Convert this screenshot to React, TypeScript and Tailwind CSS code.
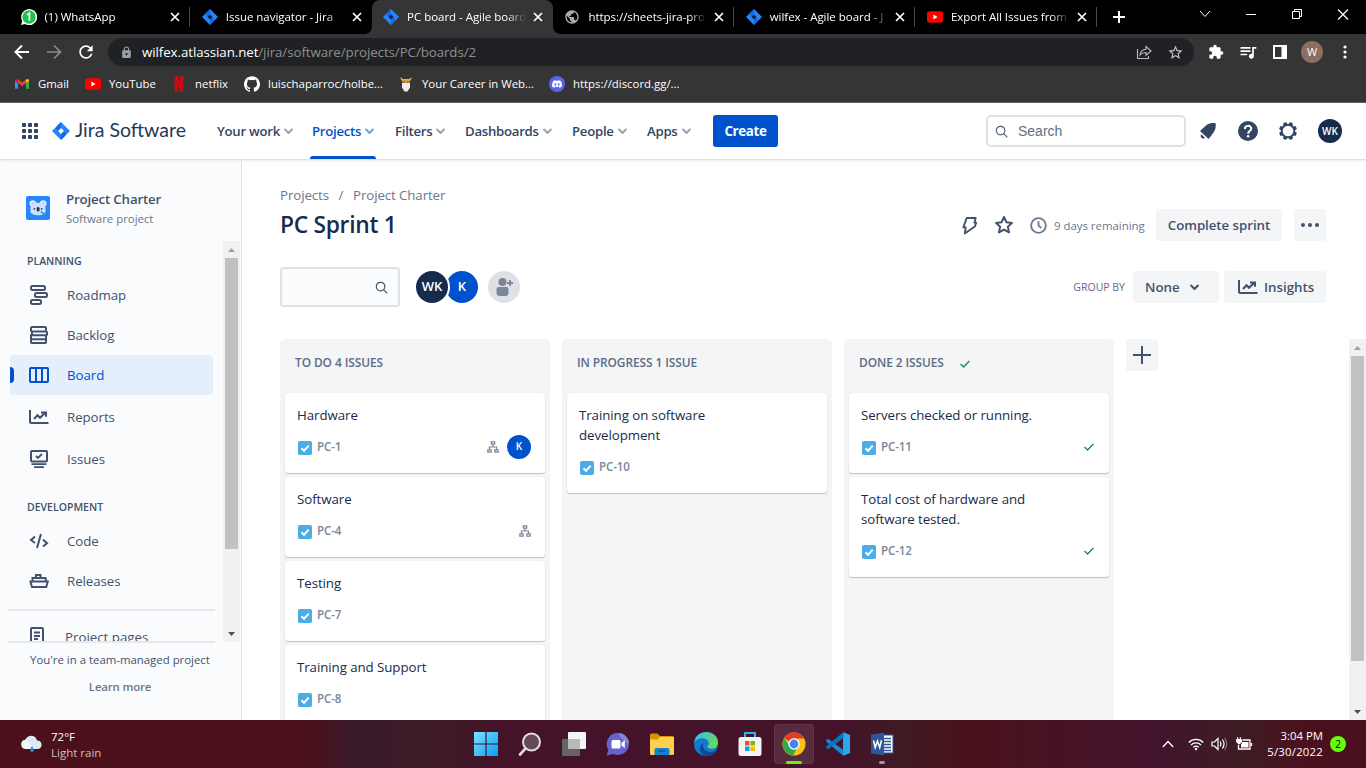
import React from "react";
import { MdExtension, MdLock, MdQueueMusic, MdRefresh, MdPublic, MdStarBorder } from "react-icons/md";
import { SiGithub, SiDiscord, SiNetflix } from "react-icons/si";

/* ---------- Brand marks ---------- */

function JiraMark({ className, hole = "#14233f" }: { className: string; hole?: string }) {
  return (
    <svg viewBox="0 0 18 18" className={className}>
      <path d="M9 0 18 9 9 18 0 9Z" fill="#2684ff" />
      <path d="M9 0v6.1L6.1 9 4.6 7.4C3.8 6 4.2 4.8 5 4Z" fill="#0f62d8" opacity=".75" />
      <path d="M9 18v-6.1L11.9 9l1.5 1.6c.8 1.4.4 2.6-.4 3.4Z" fill="#0f62d8" opacity=".75" />
      <path d="M9 6.1 11.9 9 9 11.9 6.1 9Z" fill={hole} />
    </svg>
  );
}

function YouTubeMark() {
  return (
    <svg viewBox="0 0 16 16" className="size-4 shrink-0">
      <rect y="2.2" width="16" height="11.6" rx="2.8" fill="#f00" />
      <path d="M6.4 5.6v4.8L10.5 8Z" fill="#fff" />
    </svg>
  );
}

function WhatsAppMark() {
  return (
    <svg viewBox="0 0 16 16" className="size-4 shrink-0">
      <path d="M0 16 1.2 12A8 8 0 1 1 4 14.9Z" fill="#fff" />
      <circle cx="8" cy="8" r="6.7" fill="#1fc24f" />
      <path d="M6.2 5.9 8.4 4.2v7.6" stroke="#fff" strokeWidth="1.7" fill="none" />
    </svg>
  );
}

function GmailMark() {
  return (
    <svg viewBox="0 0 16 16" className="size-4 shrink-0">
      <path d="M1 4.5v8.3h3V7Z" fill="#4285f4" />
      <path d="M15 4.5v8.3h-3V7Z" fill="#34a853" />
      <path d="M4 7V3.6l4 3 4-3V7l-4 3Z" fill="#ea4335" />
      <path d="M1 4.6C1 3 2.7 2.6 4 3.6V7L1 4.9Z" fill="#c5221f" />
      <path d="M15 4.6C15 3 13.3 2.6 12 3.6V7l3-2.1Z" fill="#fbbc04" />
    </svg>
  );
}

function BeardMark() {
  return (
    <svg viewBox="0 0 16 16" className="size-4 shrink-0">
      <path d="M2.5 1c0 2 .6 3.4 2 4h7c1.4-.6 2-2 2-4l-2.2 2H4.7Z" fill="#e8b04c" />
      <path d="M4.5 4h7v4h-7Z" fill="#d99a4b" />
      <path d="M4 7h8v4.5l-2.5 4h-3L4 11.5Z" fill="#f1efec" />
      <path d="M5.8 6h1M9.2 6h1" stroke="#4a2b17" />
    </svg>
  );
}

/* ---------- Browser ---------- */

type Tab = { title: string; icon: React.ReactNode; active?: boolean; divider?: boolean };

const tabs: Tab[] = [
  { title: "(1) WhatsApp", icon: <WhatsAppMark />, divider: true },
  { title: "Issue navigator - Jira", icon: <JiraMark className="size-4 shrink-0" /> },
  { title: "PC board - Agile board", icon: <JiraMark className="size-4 shrink-0" />, active: true },
  { title: "https://sheets-jira-pro", icon: <MdPublic className="size-4 shrink-0 text-[#a9adb3]" />, divider: true },
  { title: "wilfex - Agile board - J", icon: <JiraMark className="size-4 shrink-0" />, divider: true },
  { title: "Export All Issues from", icon: <YouTubeMark />, divider: true },
];

function TabStrip() {
  return (
    <div className="flex h-[34px] bg-black pl-[9px] text-[11.5px] text-white">
      {tabs.map((tab) => (
        <div
          key={tab.title}
          className={`relative flex w-[181.3px] shrink-0 items-center pl-[11.5px] pr-[10px] ${tab.active ? "rounded-t-lg bg-[#353535]" : ""}`}
        >
          {tab.icon}
          <span className="ml-2 w-[119px] overflow-hidden whitespace-nowrap tracking-[-0.03px] [mask-image:linear-gradient(to_right,black_84%,transparent)]">
            {tab.title}
          </span>
          <svg viewBox="0 0 10 10" className="ml-auto size-[10px] shrink-0">
            <path d="m1 1 8 8M9 1 1 9" stroke="#fff" strokeWidth="1.7" />
          </svg>
          {tab.active && (
            <>
              <span className="absolute -left-2 bottom-0 size-2 bg-[radial-gradient(circle_at_0_0,transparent_8px,#353535_8px)]" />
              <span className="absolute -right-2 bottom-0 size-2 bg-[radial-gradient(circle_at_100%_0,transparent_8px,#353535_8px)]" />
            </>
          )}
          {tab.divider && <span className="absolute right-0 top-[7px] h-5 w-px bg-[#4a4a4a]" />}
        </div>
      ))}
      <svg viewBox="0 0 12 12" className="ml-[16px] mt-[11px] size-3">
        <path d="M6 0v12M0 6h12" stroke="#fff" strokeWidth="2" />
      </svg>
      <div className="ml-auto flex h-7 text-white">
        <svg viewBox="0 0 46 28" className="w-[46px]" fill="none" stroke="currentColor">
          <path d="m18 11 5 5.500 5-5.500" />
        </svg>
        <svg viewBox="0 0 46 28" className="w-[46px]" fill="none" stroke="currentColor">
          <path d="M18 14.500h10" />
        </svg>
        <svg viewBox="0 0 46 28" className="w-[46px]" fill="none" stroke="currentColor">
          <path d="M18.500 11.500h7v7h-7ZM20.500 11V9.500h7v7H26" />
        </svg>
        <svg viewBox="0 0 46 28" className="w-[46px]" fill="none" stroke="currentColor">
          <path d="m18 9.500 10 10M28 9.500l-10 10" strokeWidth="1.2" />
        </svg>
      </div>
    </div>
  );
}

function AddressRow() {
  return (
    <div className="flex h-9 items-center">
      <svg viewBox="0 0 16 16" className="ml-[14px] size-4" fill="none" stroke="#fff" strokeWidth="1.9">
        <path d="M15 8H2M8 1.500 1.500 8 8 14.500" />
      </svg>
      <svg viewBox="0 0 16 16" className="ml-4 size-4" fill="none" stroke="#8b8b8b" strokeWidth="1.7">
        <path d="M1 8h13M8 1.500 14.500 8 8 14.500" />
      </svg>
      <MdRefresh className="ml-[14px] size-5 text-white" />
      <div className="ml-[12px] flex h-7 w-[1086px] items-center rounded-full bg-[#202124] pl-3">
        <MdLock className="size-[13px] text-[#9aa0a6]" />
        <span className="ml-[9px] pt-px text-[13.3px] tracking-[-0.07px] text-[#8f8f8f]">
          <span className="text-white">wilfex.atlassian.net</span>/jira/software/projects/PC/boards/2
        </span>
        <svg viewBox="0 0 16 16" className="ml-auto size-4" fill="none" stroke="#b9b9b9" strokeWidth="1.1">
          <path d="M1.500 5v9.500h11V12M4 11c.4-3.600 2.500-5.700 6-5.800V2.500L15 7l-5 4.200V8.500C7.500 8.400 5.600 9 4 11Z" />
        </svg>
        <MdStarBorder className="ml-[15px] mr-[10px] size-[17px] text-[#c4c4c4]" />
      </div>
      <MdExtension className="ml-[14px] size-4 text-white" />
      <MdQueueMusic className="ml-[14px] size-5 text-white" />
      <svg viewBox="0 0 14 14" className="ml-[15px] size-[14px]">
        <path d="M0 0h14v14H0Zm2 2v10h6.500V2Z" fill="#fff" fillRule="evenodd" />
      </svg>
      <span className="ml-[14px] flex size-[22px] items-center justify-center rounded-full bg-[#8d6e63] text-[11px] text-white">
        W
      </span>
      <svg viewBox="0 0 4 14" className="ml-5 h-[14px] w-1" fill="#fff">
        <circle cx="2" cy="2" r="1.6" />
        <circle cx="2" cy="7" r="1.6" />
        <circle cx="2" cy="12" r="1.6" />
      </svg>
    </div>
  );
}

const bookmarks = [
  { label: "Gmail", icon: <GmailMark />, width: "w-[71px]" },
  { label: "YouTube", icon: <YouTubeMark />, width: "w-[86px]" },
  { label: "netflix", icon: <SiNetflix className="size-4 shrink-0 text-[#d60812]" />, width: "w-[73px]" },
  { label: "luischaparroc/holbe...", icon: <SiGithub className="size-4 shrink-0" />, width: "w-[154px]" },
  { label: "Your Career in Web...", icon: <BeardMark />, width: "w-[151px]" },
  {
    label: "https://discord.gg/...",
    icon: (
      <span className="flex size-4 shrink-0 items-center justify-center rounded-full bg-[#5865f2]">
        <SiDiscord className="size-[10px]" />
      </span>
    ),
    width: "w-[150px]",
  },
];

function BookmarksBar() {
  return (
    <div className="flex h-[33px] items-center border-b border-[#5a5a5a] pb-1 pl-[14px] text-[11.4px] text-white">
      {bookmarks.map((b) => (
        <div key={b.label} className={`flex shrink-0 items-center gap-2 whitespace-nowrap ${b.width}`}>
          {b.icon}
          <span>{b.label}</span>
        </div>
      ))}
    </div>
  );
}

/* ---------- Jira header ---------- */

function Chevron({ className }: { className: string }) {
  return (
    <svg viewBox="0 0 8 6" className={className} fill="none" stroke="currentColor" strokeWidth="1.8" strokeLinecap="round" strokeLinejoin="round">
      <path d="m1 1.300 3 3 3-3" />
    </svg>
  );
}

function SearchIcon({ className }: { className: string }) {
  return (
    <svg viewBox="0 0 14 14" className={className} fill="none" stroke="currentColor" strokeWidth="1.3" strokeLinecap="round">
      <circle cx="6" cy="6" r="4.6" />
      <path d="m9.500 9.500 3.300 3.300" />
    </svg>
  );
}

const navItems = [
  { label: "Your work", width: "w-[95px]", labelWidth: "w-[67px]" },
  { label: "Projects", width: "w-[83px]", labelWidth: "w-[53px]", active: true },
  { label: "Filters", width: "w-[70px]", labelWidth: "w-[41px]" },
  { label: "Dashboards", width: "w-[107px]", labelWidth: "w-[78px]" },
  { label: "People", width: "w-[75px]", labelWidth: "w-[46px]" },
  { label: "Apps", width: "w-[66px]", labelWidth: "w-[35px]" },
];

function GearIcon() {
  return (
    <svg viewBox="0 0 20 20" className="size-5">
      <g fill="#344563">
        {[22.5, 67.5, 112.5, 157.5, 202.5, 247.5, 292.5, 337.5].map((angle) => (
          <rect key={angle} x="8.1" y="1" width="3.8" height="4" rx="1" transform={`rotate(${angle} 10 10)`} />
        ))}
      </g>
      <circle cx="10" cy="10" r="6.3" fill="#fff" stroke="#344563" strokeWidth="1.9" />
    </svg>
  );
}

function JiraHeader() {
  return (
    <header className="relative z-10 flex h-14 shrink-0 items-center bg-white pl-[22px] text-[#344563] shadow-[0_1px_1px_#dfe1e6,0_2px_3px_#eceef1]">
      <svg viewBox="0 0 16 16" className="size-4" fill="#344563">
        {[0, 6, 12].map((y) => [0, 6, 12].map((x) => <rect key={`${x}-${y}`} x={x} y={y} width="4" height="4" rx=".8" />))}
      </svg>
      <JiraMark className="ml-[14px] size-[18px]" hole="#fff" />
      <span className="ml-[5px] w-[142px] pb-[2px] font-['Lato',sans-serif] text-[19.5px] leading-none text-[#253858]">Jira Software</span>
      <nav className="flex h-full text-[13.2px] font-semibold tracking-[-0.27px]">
        {navItems.map((item) => (
          <div key={item.label} className={`relative flex shrink-0 items-center whitespace-nowrap ${item.width} ${item.active ? "text-[#0052cc]" : ""}`}>
            <span className={`pt-[2px] ${item.labelWidth}`}>{item.label}</span>
            <Chevron className={`h-[7px] w-[9px] ${item.active ? "text-[#6f9fe6]" : "text-[#9aa3b3]"}`} />
            {item.active && <span className="absolute -left-[2px] bottom-0 h-[3px] w-[66px] rounded-t-sm bg-[#0052cc]" />}
          </div>
        ))}
      </nav>
      <button className="h-8 w-[65px] rounded-[3px] bg-[#0052cc] pt-[2px] text-[13.3px] font-bold tracking-[-0.3px] text-white">Create</button>
      <div className="ml-auto flex h-8 w-[200px] items-center rounded-[5px] border-2 border-[#dfe1e6] pl-[7px]">
        <SearchIcon className="size-[13px] text-[#505f79]" />
        <span className="ml-[10px] font-['Liberation_Sans',sans-serif] text-[14px] text-[#626f86]">Search</span>
      </div>
      <svg viewBox="0 0 20 20" className="ml-3 size-5" fill="#344563">
        <path d="M2 10 8 4.500C11 2.200 14.500 1.900 17.600 2.200c.4 3 .1 6-1.900 9L10.600 18Z" />
        <path d="M3.200 13.200a2.600 2.600 0 0 0 3.700 3.600Z" />
      </svg>
      <svg viewBox="0 0 20 20" className="ml-5 size-5">
        <circle cx="10" cy="10" r="10" fill="#344563" />
        <path d="M6.900 7.900c0-4 6.300-4 6.300-.2 0 2.400-3.100 2.400-3.100 5" fill="none" stroke="#fff" strokeWidth="2" />
        <circle cx="10.1" cy="15.3" r="1.25" fill="#fff" />
      </svg>
      <div className="ml-5">
        <GearIcon />
      </div>
      <span className="ml-5 mr-6 flex size-6 items-center justify-center rounded-full bg-[#172b4d] text-[10px] font-semibold text-white">WK</span>
    </header>
  );
}

/* ---------- Sidebar ---------- */

const icons = {
  roadmap: (
    <>
      <rect x="4" y="3" width="14" height="4" rx="1.5" />
      <rect x="8" y="10" width="12" height="4" rx="1.5" />
      <rect x="4" y="17" width="10" height="4" rx="1.5" />
    </>
  ),
  backlog: (
    <>
      <path d="M4 8.500V5q0-1 1-1h13q1 0 1 1v3.500M4 8.500h15q1 0 1 1v1.800q0 1-1 1H6M5 8.500v4M4 12.300h15v4H4Z" />
      <path d="M4 16v3.200q0 .8.8.8h13.400q.8 0 .8-.8V16" />
    </>
  ),
  board: (
    <>
      <rect x="3" y="5" width="18" height="14" rx="1" />
      <path d="M9 5v14M15 5v14" />
    </>
  ),
  reports: (
    <>
      <path d="M3 5v11.500q0 1.500 1.500 1.500H21.500" />
      <path d="m7 14 3.500-3.800 2.500 2.600 5-4.800M14 7.500h5v4.300" />
    </>
  ),
  issues: (
    <>
      <rect x="4" y="4" width="16" height="10.5" rx="1" />
      <path d="m9 9 2 2 4-4M4.500 17.200h15M7 20.200h10" strokeWidth="1.8" />
    </>
  ),
  code: <path d="M8 7.500 4 11l4 3M14 5l-4 14M16 10.500l4 3.700-4 3.300" />,
  releases: (
    <>
      <path d="M3.500 12.500h17.300l-1.600 5.500H5Q4 15 3.500 12.500ZM5.500 12V9h13l.5 3M9 9V6h4.500v3" />
    </>
  ),
  pages: (
    <>
      <rect x="4" y="3" width="12" height="18" rx="1" />
      <path d="M7 7.500h6M7 11h6M7 14h4" />
    </>
  ),
};

function LineIcon({ name, className = "size-6" }: { name: keyof typeof icons; className?: string }) {
  return (
    <svg viewBox="0 0 24 24" className={`shrink-0 ${className}`} fill="none" stroke="currentColor" strokeWidth="2">
      {icons[name]}
    </svg>
  );
}

function SideItem({ icon, label, active }: { icon: keyof typeof icons; label: string; active?: boolean }) {
  return (
    <div
      className={`relative ml-[10px] flex h-10 w-[203px] shrink-0 items-center rounded pl-[17px] text-[13.3px] ${
        active ? "bg-[#e5effc] text-[#0052cc]" : "text-[#42526e]"
      }`}
    >
      {active && <span className="absolute left-0 h-4 w-1 rounded-r-sm bg-[#0052cc]" />}
      <LineIcon name={icon} />
      <span className="ml-4 leading-5 tracking-[-0.07px]">{label}</span>
    </div>
  );
}

function ScrollBar({ thumb }: { thumb: string }) {
  return (
    <div className="flex w-[17px] shrink-0 flex-col items-center bg-[#f1f1f1]">
      <svg viewBox="0 0 17 17" className="size-[17px] shrink-0">
        <path d="m5 11 3.500-4 3.500 4Z" fill="#a0a0a0" />
      </svg>
      <div className={`w-[13px] bg-[#c1c1c1] ${thumb}`} />
      <svg viewBox="0 0 17 17" className="mt-auto size-[17px] shrink-0">
        <path d="m5 7 3.500 4L12 7Z" fill="#505050" />
      </svg>
    </div>
  );
}

function KoalaAvatar() {
  return (
    <svg viewBox="0 0 24 24" className="size-6">
      <rect width="24" height="24" rx="2" fill="#2684ff" />
      <circle cx="6.8" cy="7.5" r="3.3" fill="#deebff" />
      <circle cx="17.2" cy="7.5" r="3.3" fill="#deebff" />
      <circle cx="6.9" cy="7.7" r="1.5" fill="#a9c9fa" />
      <circle cx="17.1" cy="7.7" r="1.5" fill="#a9c9fa" />
      <path d="M4.500 12c0-7 15-7 15 0v3.500c0 5-15 5-15 0Z" fill="#cfe1fd" />
      <rect x="10.7" y="11" width="2.8" height="4.5" rx="1.3" fill="#253858" />
      <circle cx="8.3" cy="12.8" r=".9" fill="#253858" />
      <circle cx="15.7" cy="12.8" r=".9" fill="#253858" />
      <path d="m15 15.500 3.500 3" stroke="#00b8d9" strokeWidth="1.7" />
    </svg>
  );
}

function Sidebar() {
  return (
    <aside className="flex w-[242px] shrink-0 flex-col border-r border-[#e1e3e8] bg-[#fafbfc]">
      <div className="flex h-[82px] shrink-0 pl-[26px] pt-[30px]">
        <div className="pt-[7px]">
          <KoalaAvatar />
        </div>
        <div className="ml-4">
          <div className="text-[13.3px] font-semibold leading-5 tracking-[-0.17px] text-[#42526e]">Project Charter</div>
          <div className="text-[11.4px] leading-5 text-[#6b778c]">Software project</div>
        </div>
      </div>
      <div className="flex h-[401px] shrink-0">
        <div className="flex w-[223px] flex-col overflow-hidden pt-[13px]">
          <h3 className="pl-[27px] text-[10.5px] font-semibold leading-[14px] text-[#42526e]">PLANNING</h3>
          <div className="mt-[7px]">
            <SideItem icon="roadmap" label="Roadmap" />
            <SideItem icon="backlog" label="Backlog" />
            <SideItem icon="board" label="Board" active />
          </div>
          <div className="mt-[2px] flex flex-col gap-[2px]">
            <SideItem icon="reports" label="Reports" />
            <SideItem icon="issues" label="Issues" />
          </div>
          <h3 className="mt-[21px] pl-[27px] text-[10.5px] font-semibold leading-[14px] text-[#42526e]">DEVELOPMENT</h3>
          <div className="mt-[7px]">
            <SideItem icon="code" label="Code" />
            <SideItem icon="releases" label="Releases" />
          </div>
          <div className="ml-2 mt-2 h-[2px] w-[207px] shrink-0 bg-[#e6e8ec]" />
          <div className="flex h-[52px] shrink-0 items-center pl-[27px] text-[13.3px] text-[#42526e]">
            <LineIcon name="pages" />
            <span className="ml-[14px] leading-5">Project pages</span>
          </div>
        </div>
        <ScrollBar thumb="h-[291px]" />
      </div>
      <div className="-mt-px ml-2 h-[2px] w-[207px] shrink-0 bg-[#e6e8ec]" />
      <div className="w-[240px] pt-[7px] text-center text-[11.4px] leading-5 text-[#42526e]">You're in a team-managed project</div>
      <div className="w-[240px] pt-[7px] text-center text-[11.4px] font-semibold leading-5 tracking-[-0.15px] text-[#6b778c]">Learn more</div>
    </aside>
  );
}

/* ---------- Board ---------- */

type Issue = { key: string; title: string; subtasks?: boolean; assignee?: string; done?: boolean };

const columns: { title: string; done?: boolean; issues: Issue[] }[] = [
  {
    title: "TO DO 4 ISSUES",
    issues: [
      { key: "PC-1", title: "Hardware", subtasks: true, assignee: "K" },
      { key: "PC-4", title: "Software", subtasks: true },
      { key: "PC-7", title: "Testing" },
      { key: "PC-8", title: "Training and Support" },
    ],
  },
  { title: "IN PROGRESS 1 ISSUE", issues: [{ key: "PC-10", title: "Training on software development" }] },
  {
    title: "DONE 2 ISSUES",
    done: true,
    issues: [
      { key: "PC-11", title: "Servers checked or running.", done: true },
      { key: "PC-12", title: "Total cost of hardware and software tested.", done: true },
    ],
  },
];

function DoneTick() {
  return (
    <svg viewBox="0 0 10 8" className="h-2 w-[10px]" fill="none" stroke="#178f5f" strokeWidth="1.4">
      <path d="m.6 4 3 3L9.400 1" />
    </svg>
  );
}

function IssueCard({ issue }: { issue: Issue }) {
  return (
    <article className="shrink-0 rounded-[3px] bg-white px-3 pb-3 pt-3 shadow-[0_1px_1px_#b9bfca,0_0_1px_#c1c7d0]">
      <p className="w-[180px] text-[13.3px] leading-5 tracking-[-0.07px] text-[#172b4d]">{issue.title}</p>
      <div className="mt-[7px] flex h-[29px] items-center">
        <svg viewBox="0 0 14 14" className="ml-px mt-[2px] size-[14px]">
          <rect width="14" height="14" rx="1.8" fill="#4bade8" />
          <path d="m3.500 7.300 2.500 2.500 4.700-5.200" fill="none" stroke="#fff" strokeWidth="2" />
        </svg>
        <span className="ml-[5px] text-[11.6px] font-semibold tracking-[-0.15px] text-[#7a869a]">{issue.key}</span>
        <div className="ml-auto mr-[2px] flex items-center gap-2">
          {issue.subtasks && (
            <svg viewBox="0 0 12 12" className="size-3" fill="none" stroke="#7a869a" strokeWidth="1.2">
              <path d="M4.300.8h3.400v2.400H4.300ZM.8 8.800h3.400v2.400H.8ZM7.800 8.800h3.400v2.400H7.800ZM6 3.200V6M2.500 8.800V6h7v2.800" />
            </svg>
          )}
          {issue.assignee && (
            <span className="flex size-6 items-center justify-center rounded-full bg-[#0052cc] text-[10px] font-semibold text-white">{issue.assignee}</span>
          )}
          {issue.done && (
            <span className="mr-[1px] mt-px">
              <DoneTick />
            </span>
          )}
        </div>
      </div>
    </article>
  );
}

function Board() {
  return (
    <div className="flex h-[381px] overflow-hidden">
      <div className="flex gap-3">
        {columns.map((column) => (
          <section key={column.title} className="flex w-[270px] flex-col rounded-t-[5px] bg-[#f4f5f7] px-[5px]">
            <h2 className="flex h-[54px] shrink-0 items-start gap-4 pl-[10px] pt-[14px] text-[11.9px] font-semibold leading-[18px] text-[#5e6c84]">
              <span className="whitespace-nowrap tracking-[-0.07px]">{column.title}</span>
              {column.done && (
                <span className="pt-[7px]">
                  <DoneTick />
                </span>
              )}
            </h2>
            <div className="flex w-[260px] flex-col gap-1">
              {column.issues.map((issue) => (
                <IssueCard key={issue.key} issue={issue} />
              ))}
            </div>
          </section>
        ))}
        <button className="flex size-8 items-center justify-center rounded-[3px] bg-[#f4f5f7]">
          <svg viewBox="0 0 18 18" className="size-[18px]" stroke="#42526e" strokeWidth="2">
            <path d="M9 0v18M0 9h18" />
          </svg>
        </button>
      </div>
      <div className="ml-auto flex">
        <ScrollBar thumb="h-[305px]" />
      </div>
    </div>
  );
}

function MainPane() {
  return (
    <main className="flex min-w-0 flex-1 flex-col bg-white pl-[38px]">
      <div className="mt-[26px] flex h-5 text-[13.3px] leading-5 tracking-[-0.1px] text-[#6b778c]">
        <span className="w-[49px]">Projects</span>
        <span className="w-[24px] text-center">/</span>
        <span>Project Charter</span>
      </div>
      <div className="mr-10 mt-1 flex h-8 items-center text-[#42526e]">
        <h1 className="text-[22.8px] font-semibold tracking-[-0.3px] text-[#172b4d]">PC Sprint 1</h1>
        <svg viewBox="0 0 18 20" className="ml-auto h-[19px] w-[17px]" fill="none" stroke="currentColor" strokeWidth="2" strokeLinejoin="round">
          <path d="M6 2h9.500l-1.300 5H16l-1.300 4L4 18.500 5 12H2.500Z" />
        </svg>
        <svg viewBox="0 0 20 20" className="ml-4 size-5" fill="none" stroke="currentColor" strokeWidth="2" strokeLinejoin="round">
          <path d="m10 2 2.400 5.200 5.600.7-4.100 3.900 1.100 5.600-5-2.800-5 2.800 1.100-5.600L2 7.900l5.600-.7Z" />
        </svg>
        <svg viewBox="0 0 18 18" className="ml-[16px] size-[17px] text-[#6b778c]" fill="none" stroke="currentColor" strokeWidth="1.9">
          <circle cx="9" cy="9" r="7.8" />
          <path d="M9 4.500V9l2.800 2.800" />
        </svg>
        <span className="ml-[7px] w-[91px] whitespace-nowrap pt-px text-[11.4px] text-[#6b778c]">9 days remaining</span>
        <button className="ml-[11px] h-8 w-[126px] rounded-[3px] bg-[#f4f5f7] text-[13.3px] font-semibold leading-5 tracking-[-0.05px]">Complete sprint</button>
        <button className="ml-3 flex size-8 items-center justify-center gap-[3px] rounded-[3px] bg-[#f4f5f7]">
          <span className="size-1 rounded-full bg-[#42526e]" />
          <span className="size-1 rounded-full bg-[#42526e]" />
          <span className="size-1 rounded-full bg-[#42526e]" />
        </button>
      </div>
      <div className="mr-10 mt-[26px] flex h-10 items-center text-[#42526e]">
        <div className="flex h-10 w-[120px] items-center justify-end rounded-[3px] border-2 border-[#dfe1e6] bg-[#fafbfc] pr-[10px]">
          <SearchIcon className="size-[13px]" />
        </div>
        <div className="ml-4 flex items-center text-[13px] font-semibold text-white">
          <span className="z-10 flex size-8 items-center justify-center rounded-full bg-[#172b4d] ring-2 ring-white">WK</span>
          <span className="-ml-[2px] flex size-8 items-center justify-center rounded-full bg-[#0052cc]">K</span>
        </div>
        <span className="ml-[10px] flex size-8 items-center justify-center rounded-full bg-[#dfe1e6]">
          <svg viewBox="0 0 18 18" className="size-[18px]" fill="#7a869a">
            <circle cx="7.5" cy="4" r="4" />
            <path d="M1.500 11q0-2 2-2h8q2 0 2 2v3.500q0 3.500-3.500 3.500H5q-3.500 0-3.500-3.500Z" />
            <path d="M15 2v6M12 5h6" stroke="#7a869a" strokeWidth="1.8" />
          </svg>
        </span>
        <span className="ml-auto pt-[2px] text-[10.5px] text-[#5e6c84]">GROUP BY</span>
        <button className="ml-2 flex h-8 w-[86px] items-center rounded-[3px] bg-[#f4f5f7] pl-3 text-[13.3px] font-semibold leading-5">
          <span className="w-[45px] text-left">None</span>
          <Chevron className="h-[7px] w-[9px]" />
        </button>
        <button className="ml-[5px] flex h-8 w-[102px] items-center rounded-[3px] bg-[#f4f5f7] pl-3 text-[13.3px] font-semibold leading-5">
          <LineIcon name="reports" />
          <span className="ml-1">Insights</span>
        </button>
      </div>
      <div className="mt-auto">
        <Board />
      </div>
    </main>
  );
}

/* ---------- Taskbar ---------- */

function TaskButton({ children, active, mark }: { children: React.ReactNode; active?: boolean; mark?: string }) {
  return (
    <div className={`relative mx-[2px] flex h-10 w-10 items-center justify-center rounded ${active ? "bg-white/10 ring-1 ring-white/5 ring-inset" : ""}`}>
      {children}
      {mark && <span className={`absolute bottom-0 h-[3px] rounded-full ${mark}`} />}
    </div>
  );
}

function Taskbar() {
  return (
    <footer className="flex h-12 shrink-0 items-center bg-[linear-gradient(90deg,#4b101b_0,#4b101b_310px,#381a2c_360px,#3e1b26_430px,#441229_500px,#44132a_840px,#3e1b22_905px,#4a111b_960px,#42142c_1160px,#3d1c24_1240px,#4b101d_1310px)] text-white">
      <svg viewBox="0 0 24 24" className="ml-5 size-6">
        <path d="M5.500 17a4.700 4.700 0 0 1-.3-9.300C8 1.800 16 2.600 17 8.500c6.200 0 6 8.500.5 8.500Z" fill="#dce9f6" />
        <path d="M5.500 17a4.700 4.700 0 0 1-.3-9.300c4 0 4 6 11 9.300Z" fill="#fff" opacity=".6" />
        <path d="M12 14c2 3 2.500 6 0 6s-2-3 0-6Z" fill="#2f85df" />
      </svg>
      <div className="ml-[7px] w-[412.5px] pt-px text-[11.5px] leading-4">
        <div>72°F</div>
        <div className="text-[#d1bfc4]">Light rain</div>
      </div>
      <div className="flex">
        <TaskButton>
          <svg viewBox="0 0 24 24" className="size-6">
            <path d="M0 0h11.400v11.400H0ZM12.600 0H24v11.400H12.600ZM0 12.600h11.400V24H0ZM12.600 12.600H24V24H12.600Z" fill="url(#win)" />
            <defs>
              <linearGradient id="win" x1="0" y1="0" x2="1" y2="1">
                <stop stopColor="#7ce3ff" />
                <stop offset="1" stopColor="#0a9bf5" />
              </linearGradient>
            </defs>
          </svg>
        </TaskButton>
        <TaskButton>
          <svg viewBox="0 0 24 24" className="size-6" stroke="#e4dbe0">
            <circle cx="13.5" cy="10" r="8.5" fill="#67485b" strokeWidth="2" />
            <path d="m7.500 16.500-5.500 6" strokeWidth="2.6" strokeLinecap="round" />
          </svg>
        </TaskButton>
        <TaskButton>
          <svg viewBox="0 0 24 24" className="size-6">
            <rect x="6" width="18" height="17" rx="1" fill="#f4f4f4" />
            <rect y="7" width="18" height="17" rx="1" fill="#646464" />
            <path d="M6 7h12v10H6Z" fill="#b9b9b9" />
          </svg>
        </TaskButton>
        <TaskButton>
          <svg viewBox="0 0 24 24" className="size-6">
            <path d="M12 1a11 11 0 1 1-4.600 21L.8 23.500l1.500-5.800A11 11 0 0 1 12 1Z" fill="#6464cc" />
            <path d="M12 1a11 11 0 0 1 11 11c-5-2-9-7-11-11Z" fill="#8585d8" />
            <rect x="5.5" y="8" width="9" height="8.5" rx="1.5" fill="#fff" />
            <path d="m15.500 11 3.300-2.700v8L15.500 13.600Z" fill="#fff" />
          </svg>
        </TaskButton>
        <TaskButton>
          <svg viewBox="0 0 24 24" className="size-6">
            <path d="M0 3q0-1.500 1.500-1.500h6L10 4h12.500Q24 4 24 5.500V9H0Z" fill="#dc9300" />
            <path d="M0 7.500h7.500L10 5h14v16.500q0 1.500-1.500 1.500h-21Q0 23 0 21.500Z" fill="#ffd04f" />
            <path d="M4.500 23v-5q0-2 2-2h11q2 0 2 2v5Z" fill="#1582cf" />
            <path d="M8 19h8" stroke="#075a9b" strokeWidth="1.5" />
          </svg>
        </TaskButton>
        <TaskButton>
          <svg viewBox="0 0 24 24" className="size-6">
            <defs>
              <linearGradient id="edge" x1="0" y1="0" x2="1" y2=".5">
                <stop stopColor="#36b8f4" />
                <stop offset="1" stopColor="#62dc5e" />
              </linearGradient>
            </defs>
            <circle cx="12" cy="12" r="12" fill="#1478cb" />
            <path d="M.3 10C1.500 3.700 6 0 12 0c7 0 12 4.600 12 10.300 0 4.500-3.400 6.500-6.500 6.500-2.200 0-4.200-.8-4.200-2 0-.7 1.400-1.400 1.400-3.400C14.700 5 4 4.500.3 10Z" fill="url(#edge)" />
            <path d="M9.500 11c-2 5 2 10.500 10 8.500 1.800-.5 3-1.500 3.500-1.700-2 4.500-7.500 6.900-12 6.100C4.500 21.500 4 14 9.500 11Z" fill="#0b499d" />
          </svg>
        </TaskButton>
        <TaskButton>
          <svg viewBox="0 0 24 24" className="size-6">
            <path d="M7 6V1h10v5" fill="none" stroke="#29b5ee" strokeWidth="2" />
            <rect x=".5" y="5" width="23" height="19" rx="2.5" fill="#f4f4f4" />
            <path d="M7 9h4.500v4.500H7Z" fill="#f25022" />
            <path d="M12.500 9H17v4.500h-4.500Z" fill="#7fba00" />
            <path d="M7 14.500h4.500V19H7Z" fill="#00a4ef" />
            <path d="M12.500 14.500H17V19h-4.500Z" fill="#ffb900" />
          </svg>
        </TaskButton>
        <TaskButton active mark="w-4 bg-[#63f50b]">
          <svg viewBox="0 0 24 24" className="size-6">
            <circle cx="12" cy="12" r="11.5" fill="#fbc116" />
            <path d="M12 12 2 6.200C7-2.500 19-1 22 6.500H12Z" fill="#e33b2e" />
            <path d="M2 6.200C-1.500 12 1.500 22 11 23.500l5-9.500-9-1Z" fill="#2da94f" />
            <circle cx="12" cy="12" r="5.7" fill="#fff" />
            <circle cx="12" cy="12" r="4.4" fill="#4285f4" />
          </svg>
        </TaskButton>
        <TaskButton>
          <svg viewBox="0 0 24 24" className="size-6">
            <path d="M17 0 24 3v18l-7 3Z" fill="#2aa7ef" />
            <path d="m0 8.500 2-1.800L17.500 18v6L0 9.500Z" fill="#1689d2" />
            <path d="m0 15.500 2 1.800L17.500 6V0L0 14.500Z" fill="#0874ba" />
          </svg>
        </TaskButton>
        <TaskButton mark="w-[6px] bg-[#a893a0]">
          <svg viewBox="0 0 24 24" className="size-6">
            <rect x="10" y="3" width="13" height="18" fill="#fff" stroke="#2b579a" />
            <path d="M14 6.500h7M14 9.500h7M14 12.500h7M14 15.500h7M14 18.500h7" stroke="#2b579a" strokeWidth="1.3" />
            <path d="M1 2.800 14 .5v23L1 21.200Z" fill="#2b579a" />
            <path d="m3.500 8.500 1.700 7L7.500 9l2.200 6.500 1.800-7.200" fill="none" stroke="#fff" strokeWidth="1.5" />
          </svg>
        </TaskButton>
      </div>
      <div className="ml-auto flex items-center">
        <svg viewBox="0 0 12 8" className="h-2 w-3" fill="none" stroke="#fff" strokeWidth="1.3">
          <path d="m.8 7 5.200-5.500L11.200 7" />
        </svg>
        <svg viewBox="0 0 16 14" className="ml-[14px] h-[14px] w-4" fill="none" stroke="#fff" strokeWidth="1.3">
          <path d="M.8 5.500a10 10 0 0 1 14.400 0M3 8a7 7 0 0 1 10 0M5.200 10.400a4 4 0 0 1 5.600 0" />
          <circle cx="8" cy="12" r="1.2" fill="#fff" stroke="none" />
        </svg>
        <svg viewBox="0 0 17 14" className="ml-[7px] h-[14px] w-[17px]" fill="none" stroke="#fff" strokeWidth="1.2">
          <path d="M1 5h2.500L7 1.500v11L3.500 9H1ZM9 4.500q2 2.500 0 5M11.300 2.500q3.500 4.500 0 9" />
          <path d="M13.500 1q4.500 6 0 12" opacity=".4" />
        </svg>
        <svg viewBox="0 0 18 14" className="ml-[7px] h-[14px] w-[18px]" fill="none" stroke="#fff" strokeWidth="1.3">
          <path d="M7.500 3H15v9H3.500V8M16.500 6v3" />
          <path d="M7 5h6.500v5.500H6V8Z" fill="#fff" stroke="none" />
          <path d="M1.500 2.500h5V5L4 7.200 1.500 5ZM2.700 0v2.500M5.300 0v2.500" fill="#fff" strokeWidth="1" />
        </svg>
        <div className="ml-[8px] w-[62px] text-right text-[11.4px] leading-4">
          <div>3:04 PM</div>
          <div className="tracking-[0.2px]">5/30/2022</div>
        </div>
        <span className="ml-[7px] mr-5 flex size-4 items-center justify-center rounded-full bg-[#63ff0d] text-[10px] text-black">2</span>
      </div>
    </footer>
  );
}

export default function App() {
  return (
    <div className="flex h-[768px] w-[1366px] flex-col overflow-hidden bg-white font-['Open_Sans',sans-serif]">
      <div className="h-[103px] shrink-0 bg-[#353535]">
        <TabStrip />
        <AddressRow />
        <BookmarksBar />
      </div>
      <JiraHeader />
      <div className="flex min-h-0 flex-1">
        <Sidebar />
        <MainPane />
      </div>
      <Taskbar />
    </div>
  );
}
